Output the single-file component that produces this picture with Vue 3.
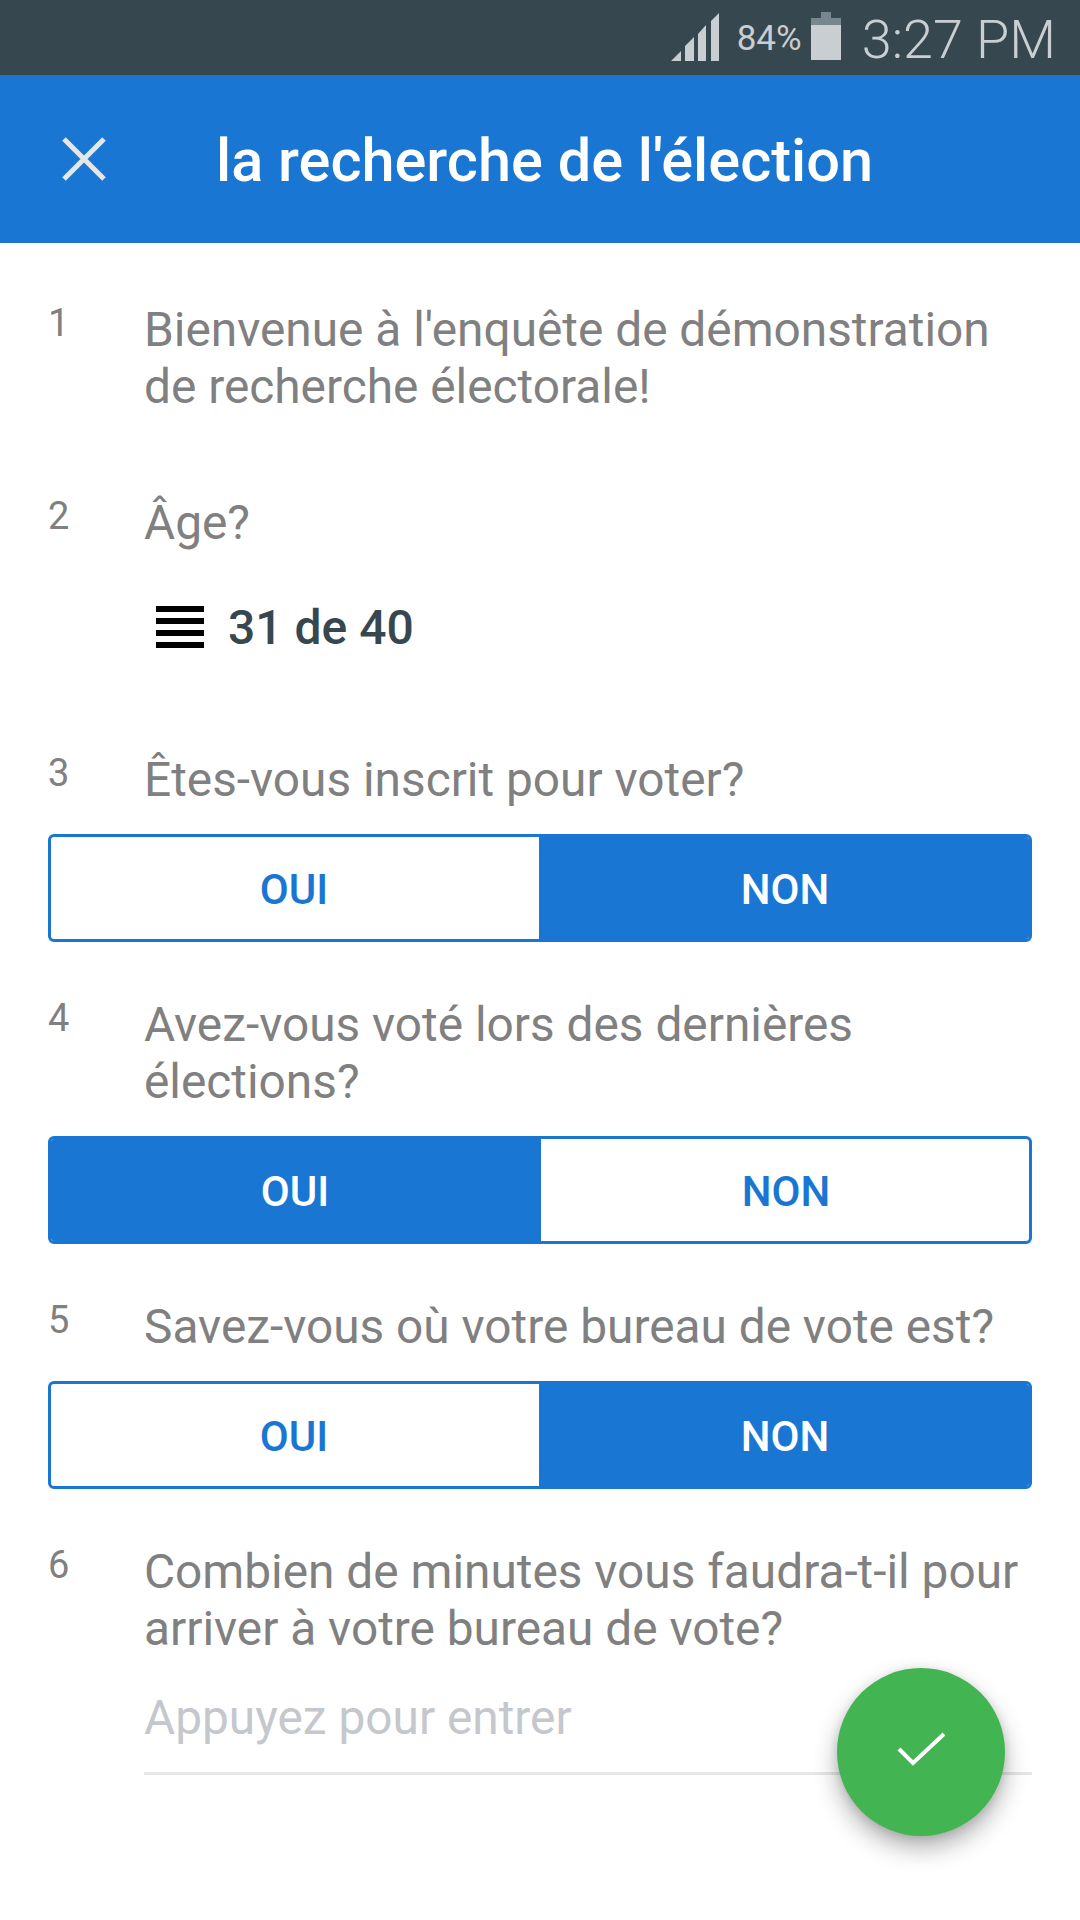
<script setup>
const questions = [
  { id: 1, lines: ["Bienvenue à l'enquête de démonstration", "de recherche électorale!"] },
  { id: 2, lines: ["Âge?"], answer: "31 de 40" },
  { id: 3, lines: ["Êtes-vous inscrit pour voter?"], choice: "NON" },
  { id: 4, lines: ["Avez-vous voté lors des dernières", "élections?"], choice: "OUI" },
  { id: 5, lines: ["Savez-vous où votre bureau de vote est?"], choice: "NON" },
  { id: 6, lines: ["Combien de minutes vous faudra-t-il pour", "arriver à votre bureau de vote?"], input: "Appuyez pour entrer" },
];
</script>

<template>
  <div class="screen">
    <div class="status-bar">
      <svg class="signal" width="48" height="48" viewBox="0 0 48 48">
        <path d="M0 48 L10 38 V48 Z M14 33 L23 24 V48 H14 Z M27 21 L35 12 V48 H27 Z M40 8 L48 0 V48 H40 Z" fill="#c8ced1" />
      </svg>
      <span class="battery-text">84%</span>
      <svg class="battery" width="30" height="48" viewBox="0 0 30 48">
        <path d="M10 0 H20 V6 H30 V13 H0 V6 H10 Z" fill="#78868d" />
        <rect y="13" width="30" height="35" fill="#c8ced1" />
      </svg>
      <span class="clock">3:27 PM</span>
    </div>

    <div class="app-bar">
      <svg class="close" width="44" height="44" viewBox="0 0 44 44">
        <path d="M2 2 L42 42 M42 2 L2 42" stroke="#e6e6e6" stroke-width="5" fill="none" />
      </svg>
      <h1 class="title">la recherche de l'élection</h1>
    </div>

    <div class="content">
      <div v-for="q in questions" :key="q.id" class="question">
        <div class="question-row">
          <div class="number">{{ q.id }}</div>
          <div class="text">
            <div v-for="line in q.lines" :key="line">{{ line }}</div>
          </div>
        </div>

        <div v-if="q.answer" class="answer">
          <div class="list-icon"><i></i><i></i><i></i><i></i></div>
          <span>{{ q.answer }}</span>
        </div>

        <div v-if="q.choice" class="toggle">
          <div class="option" :class="{ active: q.choice === 'OUI' }">OUI</div>
          <div class="option" :class="{ active: q.choice === 'NON' }">NON</div>
        </div>

        <div v-if="q.input" class="input">{{ q.input }}</div>
      </div>
    </div>

    <div class="fab">
      <svg width="50" height="36" viewBox="0 0 50 36">
        <path d="M2 17 L16 31 L47 2" stroke="#fff" stroke-width="4" fill="none" />
      </svg>
    </div>
  </div>
</template>

<style>
html,
body {
  margin: 0;
  background: #fff;
}
</style>

<style scoped>
* {
  font-family: Roboto, "Liberation Sans", sans-serif;
  box-sizing: border-box;
}

.screen {
  position: relative;
  width: 1080px;
  height: 1920px;
  background: #fff;
  overflow: hidden;
}

.status-bar {
  height: 75px;
  background: #37474f;
  display: flex;
  align-items: flex-start;
  padding: 12px 24px 0 0;
  justify-content: flex-end;
  color: #c8ced1;
}

.signal {
  margin-top: 1px;
  margin-right: 18px;
}

.battery-text {
  font-size: 35px;
  line-height: 48px;
  margin-top: 3px;
  margin-right: 9px;
}

.battery {
  margin-right: 21px;
}

.clock {
  font-size: 54px;
  font-weight: 300;
  line-height: 54px;
  margin-top: 1px;
}

.app-bar {
  height: 168px;
  background: #1976d2;
  display: flex;
  align-items: center;
  padding-left: 62px;
}

.close {
  margin-right: 110px;
}

.title {
  margin: 4px 0 0;
  font-size: 59.5px;
  font-weight: 500;
  color: #fff;
}

.content {
  padding: 57px 48px 0;
}

.question {
  margin-bottom: 53px;
}

.question:nth-child(1) {
  margin-bottom: 76px;
}

.question:nth-child(2) {
  margin-bottom: 94px;
}

.question-row {
  display: flex;
}

.number {
  width: 96px;
  flex-shrink: 0;
  font-size: 38px;
  line-height: 46px;
  color: #808080;
}

.text {
  padding: 2px 0 1px;
  font-size: 47.8px;
  line-height: 57px;
  color: #808080;
  white-space: nowrap;
}

.answer {
  display: flex;
  align-items: center;
  margin: 45px 0 0 108px;
  height: 58px;
  font-size: 48px;
  font-weight: 500;
  color: #37474f;
}

.list-icon {
  display: flex;
  flex-direction: column;
  gap: 6px;
  width: 48px;
  margin-right: 24px;
}

.list-icon i {
  display: block;
  height: 6px;
  background: #000;
}

.toggle {
  display: flex;
  margin-top: 24px;
  height: 108px;
  border: 3px solid #1976d2;
  border-radius: 6px;
  overflow: hidden;
}

.option {
  width: 488px;
  padding-top: 2px;
  display: flex;
  align-items: center;
  justify-content: center;
  font-size: 42px;
  font-weight: 500;
  color: #1976d2;
}

.option:first-child {
  padding-right: 2px;
}

.option:last-child {
  padding-left: 2px;
}

.option.active {
  width: 490px;
  background: #1976d2;
  color: #fff;
}

.input {
  margin: 30px 0 0 96px;
  height: 86px;
  border-bottom: 3px solid #e6e6e6;
  font-size: 47.8px;
  line-height: 58px;
  color: #c4c7cb;
}

.fab {
  position: absolute;
  left: 837px;
  top: 1668px;
  width: 168px;
  height: 168px;
  border-radius: 50%;
  background: #42b451;
  display: flex;
  align-items: center;
  justify-content: center;
  box-shadow: 0 12px 24px rgba(0, 0, 0, 0.3), 0 2px 10px rgba(0, 0, 0, 0.12);
}

.fab svg {
  margin: -4px 0 0 1px;
}
</style>
